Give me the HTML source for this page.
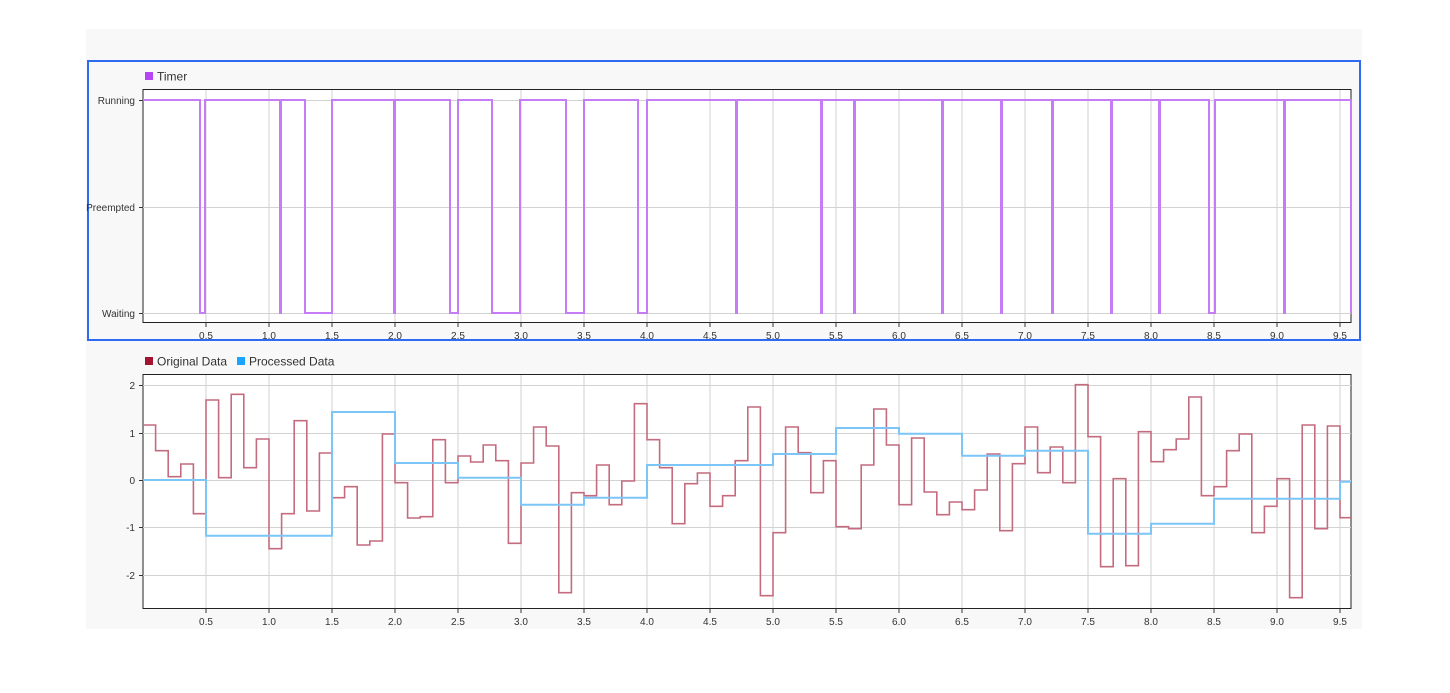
<!DOCTYPE html>
<html><head><meta charset="utf-8"><style>
html,body{margin:0;padding:0;background:#fff;width:1450px;height:693px;overflow:hidden}
svg{display:block}
text{font-family:"Liberation Sans",Arial,sans-serif;fill:#333}
</style></head><body>
<svg width="1450" height="693" viewBox="0 0 1450 693">
<rect x="86" y="29" width="1276" height="600" fill="#f8f8f8"/>
<!-- top plot -->
<rect x="88" y="61" width="1272" height="279" fill="none" stroke="#2f6bf0" stroke-width="2"/>
<rect x="145" y="72" width="8" height="8" fill="#b545f5"/>
<text x="157" y="80.5" font-size="12">Timer</text>
<rect x="143" y="89.5" width="1208" height="233" fill="#fff" stroke="#222" stroke-width="1"/>
<g stroke="#d2d2d2" stroke-width="1">
<path d="M206 90V322M269 90V322M332 90V322M395 90V322M458 90V322M521 90V322M584 90V322M647 90V322M710 90V322M773 90V322M836 90V322M899 90V322M962 90V322M1025 90V322M1088 90V322M1151 90V322M1214 90V322M1277 90V322M1340 90V322"/>
<path d="M143 100.5H1351M143 207.5H1351M143 313.5H1351"/>
</g>
<g stroke="#333" stroke-width="1">
<path d="M139 100.5H143M139 207.5H143M139 313.5H143"/>
<path d="M206 322V327M269 322V327M332 322V327M395 322V327M458 322V327M521 322V327M584 322V327M647 322V327M710 322V327M773 322V327M836 322V327M899 322V327M962 322V327M1025 322V327M1088 322V327M1151 322V327M1214 322V327M1277 322V327M1340 322V327"/>
</g>
<g font-size="10" text-anchor="end">
<text x="135" y="104">Running</text>
<text x="135" y="211">Preempted</text>
<text x="135" y="317">Waiting</text>
</g>
<g font-size="10" text-anchor="middle">
<text x="206" y="339">0.5</text><text x="269" y="339">1.0</text><text x="332" y="339">1.5</text><text x="395" y="339">2.0</text><text x="458" y="339">2.5</text><text x="521" y="339">3.0</text><text x="584" y="339">3.5</text><text x="647" y="339">4.0</text><text x="710" y="339">4.5</text><text x="773" y="339">5.0</text><text x="836" y="339">5.5</text><text x="899" y="339">6.0</text><text x="962" y="339">6.5</text><text x="1025" y="339">7.0</text><text x="1088" y="339">7.5</text><text x="1151" y="339">8.0</text><text x="1214" y="339">8.5</text><text x="1277" y="339">9.0</text><text x="1340" y="339">9.5</text>
</g>
<path fill="none" stroke="#c67cf7" stroke-width="2" d="M143 100H200V313H205V100H280V313H281V100H305V313H332V100H394V313H395V100H450V313H458V100H492V313H520V100H566V313H584V100H638V313H647V100H736V313H737V100H821V313H822V100H854V313H855V100H942V313H943V100H1001V313H1002V100H1052V313H1053V100H1111V313H1112V100H1159V313H1160V100H1209V313H1215V100H1284V313H1285V100H1351V313"/>
<!-- bottom plot -->
<rect x="145" y="357" width="8" height="8" fill="#a2142f"/>
<text x="157" y="365.5" font-size="12">Original Data</text>
<rect x="237" y="357" width="8" height="8" fill="#1aa3ff"/>
<text x="249" y="365.5" font-size="12">Processed Data</text>
<rect x="143" y="374.5" width="1208" height="234" fill="#fff" stroke="#222" stroke-width="1"/>
<g stroke="#d2d2d2" stroke-width="1">
<path d="M206 375V608M269 375V608M332 375V608M395 375V608M458 375V608M521 375V608M584 375V608M647 375V608M710 375V608M773 375V608M836 375V608M899 375V608M962 375V608M1025 375V608M1088 375V608M1151 375V608M1214 375V608M1277 375V608M1340 375V608"/>
<path d="M143 385.5H1351M143 433.5H1351M143 480.5H1351M143 527.5H1351M143 575.5H1351"/>
</g>
<g stroke="#333" stroke-width="1">
<path d="M139 385.5H143M139 433.5H143M139 480.5H143M139 527.5H143M139 575.5H143"/>
<path d="M206 608V613M269 608V613M332 608V613M395 608V613M458 608V613M521 608V613M584 608V613M647 608V613M710 608V613M773 608V613M836 608V613M899 608V613M962 608V613M1025 608V613M1088 608V613M1151 608V613M1214 608V613M1277 608V613M1340 608V613"/>
</g>
<g font-size="10" text-anchor="end">
<text x="135" y="389">2</text><text x="135" y="437">1</text><text x="135" y="484">0</text><text x="135" y="531">-1</text><text x="135" y="579">-2</text>
</g>
<g font-size="10" text-anchor="middle">
<text x="206" y="625">0.5</text><text x="269" y="625">1.0</text><text x="332" y="625">1.5</text><text x="395" y="625">2.0</text><text x="458" y="625">2.5</text><text x="521" y="625">3.0</text><text x="584" y="625">3.5</text><text x="647" y="625">4.0</text><text x="710" y="625">4.5</text><text x="773" y="625">5.0</text><text x="836" y="625">5.5</text><text x="899" y="625">6.0</text><text x="962" y="625">6.5</text><text x="1025" y="625">7.0</text><text x="1088" y="625">7.5</text><text x="1151" y="625">8.0</text><text x="1214" y="625">8.5</text><text x="1277" y="625">9.0</text><text x="1340" y="625">9.5</text>
</g>
<path fill="none" stroke="#c46c7e" stroke-width="1.6" d="M143 425H155.6V450.7H168.2V476.7H180.8V464H193.4V513.7H206V400H218.6V477.7H231.2V394.3H243.8V467.7H256.4V439H269V548.7H281.6V513.7H294.2V420.7H306.8V511H319.4V453H332V497.7H344.6V486.7H357.2V545H369.8V541H382.4V434H395V482.7H407.6V518H420.2V516.7H432.8V439.7H445.4V482.7H458V456H470.6V462H483.2V445H495.8V460.7H508.4V543.3H521V463H533.6V427H546.2V446H558.8V592.7H571.4V492.7H584V495.7H596.6V465H609.2V504.7H621.8V481H634.4V403.7H647V439.7H659.6V467.7H672.2V523.7H684.8V483.7H697.4V473H710V506.3H722.6V495.7H735.2V460.7H747.8V407H760.4V595.7H773V532.7H785.6V427H798.2V452.7H810.8V492.7H823.4V460.7H836V526.7H848.6V528.7H861.2V465H873.8V409H886.4V445H899V504.7H911.6V438H924.2V492H936.8V514.7H949.4V502H962V509.7H974.6V490H987.2V454H999.8V530.7H1012.4V463.7H1025V427H1037.6V472.7H1050.2V447H1062.8V482.7H1075.4V384.7H1088V436.7H1100.6V566.7H1113.2V478.7H1125.8V565.7H1138.4V431.7H1151V461.7H1163.6V449.7H1176.2V439H1188.8V397H1201.4V495.7H1214V486.7H1226.6V450.7H1239.2V434H1251.8V532.7H1264.4V506.3H1277V478.7H1289.6V597.7H1302.2V425H1314.8V528.7H1327.4V426H1340V517.7H1351"/>
<path fill="none" stroke="#7cc6f7" stroke-width="2" d="M143 480H206V535.7H332V412H395V463H458V477.7H521V504.7H584V497.7H647V465H773V454H836V428H899V433.7H962V455.7H1025V450.7H1088V533.7H1151V523.7H1214V498.7H1340V481.7H1351"/>
</svg>
</body></html>
